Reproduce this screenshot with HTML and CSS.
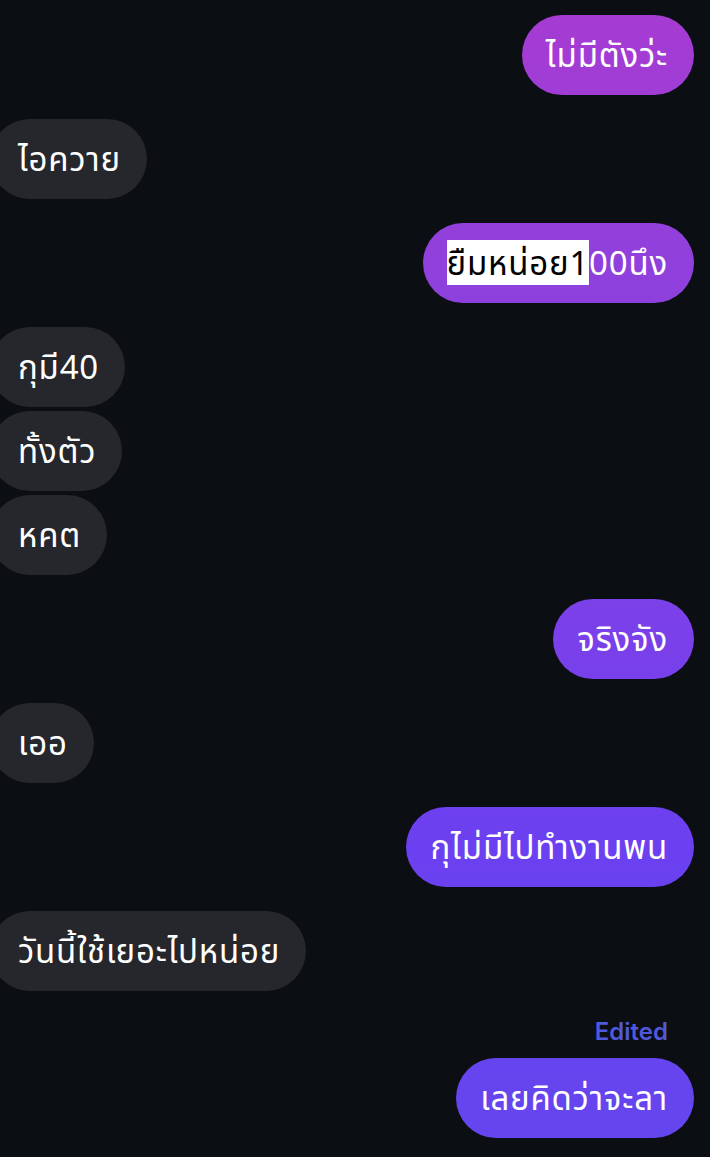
FILE: index.html
```html
<!DOCTYPE html>
<html>
<head>
    <title>Chat</title>
    <link rel="stylesheet" href="styles.css">
</head>
<body>
    <div class="thread">
        <div class="msg me">ไม่มีตังว่ะ</div>
        <div class="msg them">ไอควาย</div>
        <div class="msg me"><span class="sel">ยืมหน่อย1</span>00นึง</div>
        <div class="msg them">กุมี40</div>
        <div class="msg them grouped">ทั้งตัว</div>
        <div class="msg them grouped">หคต</div>
        <div class="msg me">จริงจัง</div>
        <div class="msg them">เออ</div>
        <div class="msg me">กุไม่มีไปทำงานพน</div>
        <div class="msg them">วันนี้ใช้เยอะไปหน่อย</div>
        <div class="edited">Edited</div>
        <div class="msg me after-label">เลยคิดว่าจะลา</div>
    </div>
</body>
</html>
```
FILE: styles.css
```css
html, body {
    margin: 0;
    background: #0b0e13;
}

body {
    font-family: "Noto Sans", "Noto Sans Thai", sans-serif;
    overflow: hidden;
    height: 1157px;
}

.thread {
    display: flex;
    flex-direction: column;
    padding: 15px 16px 0 0;
}

.msg {
    font-size: 33px;
    letter-spacing: 0.8px;
    line-height: 40px;
    padding: 20px 26px 20px 24px;
    border-radius: 40px;
    color: #fff;
    margin-top: 24px;
    white-space: nowrap;
}

.msg:first-child {
    margin-top: 0;
}

.msg.grouped {
    margin-top: 4px;
}

.me {
    align-self: flex-end;
    background: linear-gradient(to bottom, #a73bd2 0px, #9040dc 263px, #7a40ea 640px, #6b40f0 847px, #6446ee 1157px);
    background-attachment: fixed;
}

.them {
    align-self: flex-start;
    background: #25272c;
    margin-left: -10px;
    padding-left: 28px;
}

.sel {
    background: #fff;
    color: #000;
}

.num {
    letter-spacing: -1px;
}

.edited {
    align-self: flex-end;
    margin: 26px 26px 0 0;
    font-size: 24px;
    line-height: 30px;
    font-weight: 600;
    color: #5058dc;
    font-family: Inter, "Noto Sans", sans-serif;
}

.msg.after-label {
    margin-top: 11px;
}
```
